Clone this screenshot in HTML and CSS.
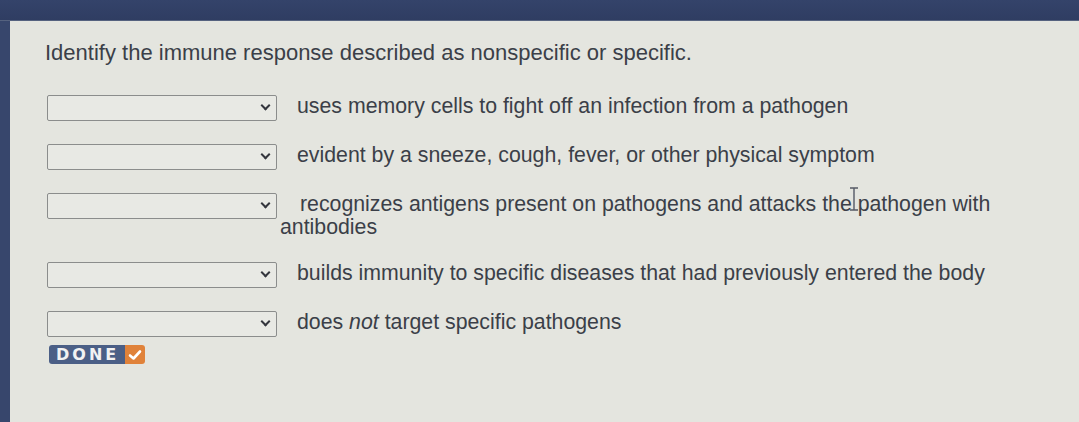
FILE: index.html
```html
<!DOCTYPE html>
<html lang="en">
<head>
  <meta charset="UTF-8">
  <title>Immune Response</title>
  <link rel="stylesheet" href="styles.css">
</head>
<body>
  <div class="topbar"></div>
  <div class="frame">
    <main class="panel">
      <p class="prompt">Identify the immune response described as nonspecific or specific.</p>

      <div class="items">
        <div class="item">
          <div class="select"><span class="chev"></span></div>
          <p class="desc">uses memory cells to fight off an infection from a pathogen</p>
        </div>
        <div class="item">
          <div class="select"><span class="chev"></span></div>
          <p class="desc">evident by a sneeze, cough, fever, or other physical symptom</p>
        </div>
        <div class="item">
          <div class="select"><span class="chev"></span></div>
          <p class="desc wide">recognizes antigens present on pathogens and attacks the pathogen with antibodies</p>
        </div>
        <div class="item">
          <div class="select"><span class="chev"></span></div>
          <p class="desc">builds immunity to specific diseases that had previously entered the body</p>
        </div>
        <div class="item">
          <div class="select"><span class="chev"></span></div>
          <p class="desc">does <em>not</em> target specific pathogens</p>
        </div>
      </div>

      <button class="done" type="button">
        <span class="done-label">DONE</span>
        <span class="done-check">
          <svg width="14" height="12" viewBox="0 0 14 12"><path d="M2 6.5 L5.5 9.5 L12 2.5" fill="none" stroke="#fff" stroke-width="2.6" stroke-linecap="round" stroke-linejoin="round"/></svg>
        </span>
      </button>

      <svg class="cursor" width="12" height="24" viewBox="0 0 12 24"><path d="M2 1 H10 M6 1 V23 M2 23 H10" fill="none" stroke="#555a66" stroke-width="1.4"/></svg>
    </main>
  </div>
</body>
</html>
```

FILE: styles.css
```css
body {
  margin: 0;
  background-color: #37466c;
  font-family: "Liberation Sans", Arial, sans-serif;
  color: #3b3f48;
  height: 422px;
  overflow: hidden;
}

.topbar {
  height: 20px;
  background: linear-gradient(#34436a, #2f3d62);
  border-bottom: 1px solid #55627f;
}

.frame {
  padding-left: 10px;
  height: 401px;
}

.panel {
  position: relative;
  height: 100%;
  background-color: #e4e5df;
  padding: 20px 0 0 35px;
  box-sizing: border-box;
}

.prompt {
  margin: 0;
  font-size: 22px;
  line-height: 24px;
}

.items {
  margin-top: 30px;
  display: flex;
  flex-direction: column;
  gap: 23px;
}

.item {
  display: flex;
  align-items: flex-start;
}

.select {
  position: relative;
  flex: none;
  width: 228px;
  height: 24px;
  margin-left: 2px;
  border: 1px solid #8b8d8c;
  border-radius: 2px;
  background-color: #e8e9e4;
}

.chev {
  position: absolute;
  right: 7px;
  top: 6px;
  width: 5px;
  height: 5px;
  border-right: 2px solid #33363d;
  border-bottom: 2px solid #33363d;
  transform: rotate(45deg);
}

.desc {
  margin: 0 0 0 3px;
  font-size: 21.3px;
  line-height: 23px;
  text-indent: 17px;
  max-width: 725px;
}

.desc.wide {
  text-indent: 20px;
}

.desc em {
  font-style: italic;
}

.done {
  display: flex;
  margin: 8px 0 0 4px;
  padding: 0;
  border: none;
  border-radius: 3px;
  overflow: hidden;
  height: 19px;
  cursor: pointer;
}

.done-label {
  background-color: #4b5f86;
  color: #f2f2f2;
  font-family: "DejaVu Sans", sans-serif;
  font-weight: bold;
  font-size: 16px;
  letter-spacing: 3px;
  line-height: 19px;
  padding: 0 6px 0 7px;
}

.done-check {
  background-color: #e0823a;
  width: 20px;
  display: flex;
  align-items: center;
  justify-content: center;
}

.cursor {
  position: absolute;
  left: 838px;
  top: 166px;
}
```
